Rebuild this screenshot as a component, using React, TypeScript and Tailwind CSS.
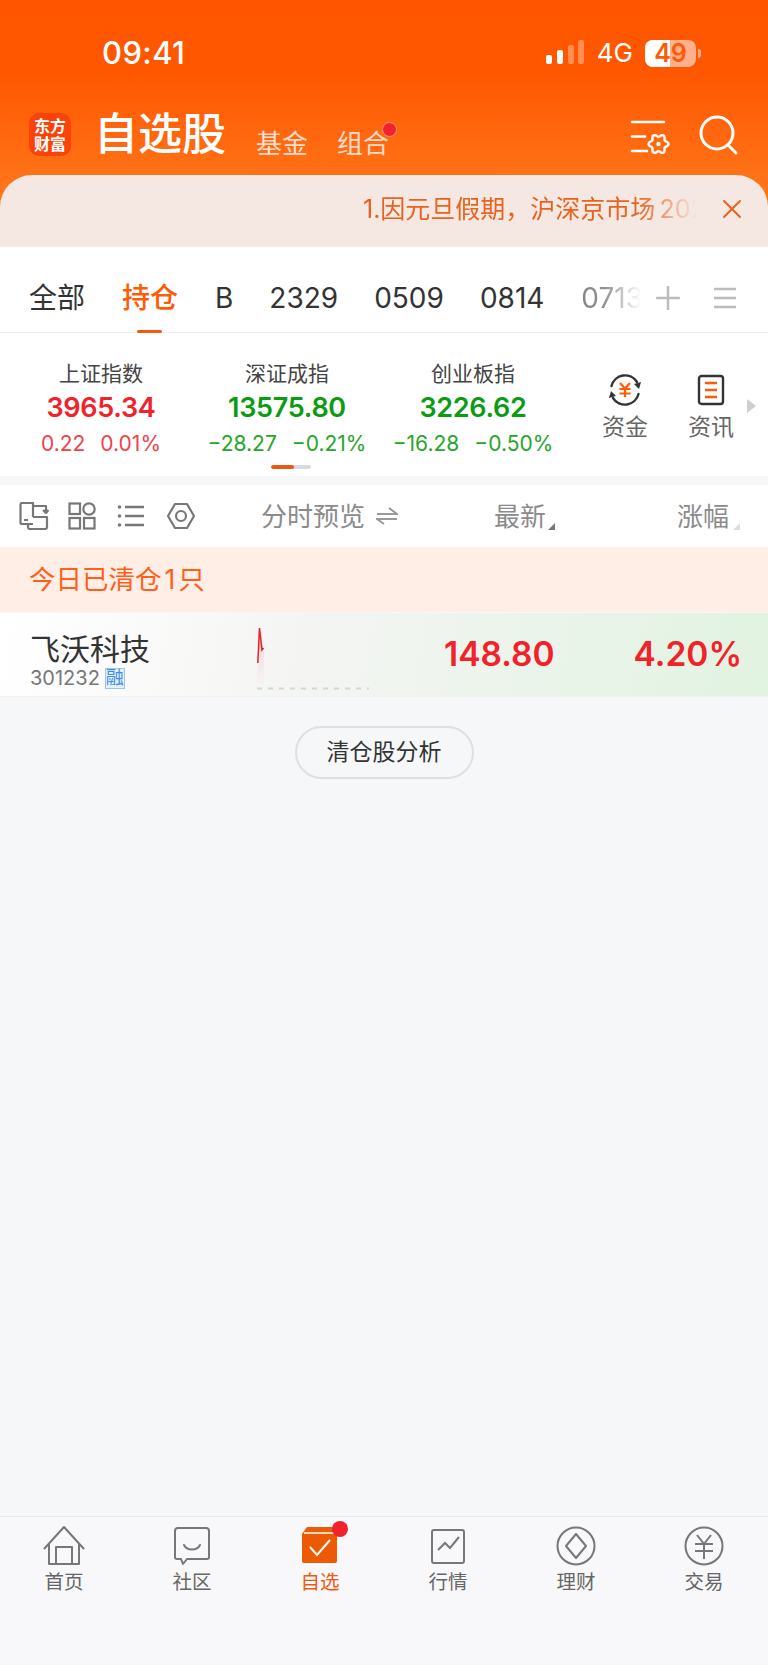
import type { ReactNode } from 'react';

const FONT = 'font-["Inter","Noto_Sans_CJK_SC",sans-serif]';

const INDEXES = [
  { name: '上证指数', value: '3965.34', a: '0.22', b: '0.01%', up: true },
  { name: '深证成指', value: '13575.80', a: '−28.27', b: '−0.21%', up: false },
  { name: '创业板指', value: '3226.62', a: '−16.28', b: '−0.50%', up: false },
];

const TABS = ['B', '2329', '0509', '0814'];

// six-lobed gear outline for the settings icon
const GEAR_PATH =
  Array.from({ length: 72 }, (_, i) => {
    const t = (i / 72) * Math.PI * 2;
    const r = 8.6 + 1.4 * Math.cos(6 * t);
    return `${i === 0 ? 'M' : 'L'}${(28.5 + r * Math.cos(t)).toFixed(2)} ${(27 + r * Math.sin(t)).toFixed(2)}`;
  }).join('') + 'z';

function Ico({ w, h, children, className }: { w: number; h: number; children: ReactNode; className?: string }) {
  return (
    <svg width={w} height={h} viewBox={`0 0 ${w} ${h}`} fill="none" className={className}>
      {children}
    </svg>
  );
}

function StatusBar() {
  return (
    <div className="flex h-[105px] items-start pt-[36px] text-white">
      <div className="ml-[102px] text-[31px] leading-[34px] font-medium tracking-[0.4px]">09:41</div>
      <div className="ml-auto mr-[67px] flex items-center">
        <Ico w={40} h={28}>
          <rect x="0" y="16" width="6" height="9" rx="2" fill="#fff" />
          <rect x="11" y="11" width="6" height="14" rx="2" fill="#fff" />
          <rect x="22" y="6" width="6" height="19" rx="2" fill="#ffa070" fillOpacity=".75" />
          <rect x="32" y="1" width="6" height="24" rx="2" fill="#ffa070" fillOpacity=".75" />
        </Ico>
        <span className="ml-[11px] text-[26px] leading-[34px]">4G</span>
        <div className="relative ml-[12px] flex h-[27px] w-[51px] items-center justify-center overflow-hidden rounded-[8px] bg-[#ffb08c] text-[25px] leading-none font-semibold text-[#ff5a05]">
          <div className="absolute inset-y-0 left-0 w-[25px] bg-white" />
          <span className="relative">49</span>
        </div>
        <div className="ml-[2px] h-[9px] w-[3px] rounded-r-full bg-[#ffb08c]" />
      </div>
    </div>
  );
}

function TitleBar() {
  return (
    <div className="flex h-[70px] items-start text-white">
      <div className="ml-[29px] mt-[8px] flex h-[43px] w-[42px] flex-col items-center justify-center rounded-[10px] bg-[#f9430a] text-[16px] leading-[18px] font-bold">
        <span>东方</span>
        <span>财富</span>
      </div>
      <div className="ml-[23px] text-[44px] leading-[58px] font-medium">自选股</div>
      <div className="ml-[30px] mt-[22px] text-[26px] leading-[34px] text-[#ffdccb]">基金</div>
      <div className="relative ml-[29px] mt-[22px] text-[26px] leading-[34px] text-[#ffdccb]">
        组合
        <span className="absolute right-[-8px] top-[-5px] h-[15px] w-[15px] rounded-full border border-[#ff9a80] bg-[#f0222b]" />
      </div>
      <Ico w={40} h={40} className="ml-auto mt-[12px]">
        <g stroke="#fff" strokeWidth="2.600" strokeLinecap="round">
          <path d="M2 5h32M2 19.500h13M2 34h15" />
        </g>
        <path d={GEAR_PATH} stroke="#fff" strokeWidth="2.400" strokeLinejoin="round" />
        <circle cx="28.500" cy="27" r="2.200" fill="#fff" />
      </Ico>
      <Ico w={40} h={42} className="ml-[29px] mr-[29px] mt-[10px]">
        <circle cx="18" cy="18" r="16" stroke="#fff" strokeWidth="3" />
        <path d="M29 30l8 8" stroke="#fff" strokeWidth="3" strokeLinecap="round" />
      </Ico>
    </div>
  );
}

function Banner() {
  return (
    <div className="flex h-[72px] items-start rounded-t-[32px] bg-[#f5e8e2] pt-[19px]">
      <div className="ml-[363px] w-[334px] overflow-hidden whitespace-nowrap text-[25px] leading-[30px] text-[#e8631f] [word-spacing:-3px] [mask-image:linear-gradient(90deg,#000_82%,transparent_100%)]">
        1.因元旦假期，沪深京市场 2026
      </div>
      <Ico w={20} h={20} className="ml-[25px] mt-[5px]">
        <path d="M2 2l16 16M18 2L2 18" stroke="#e8631f" strokeWidth="2" strokeLinecap="round" />
      </Ico>
    </div>
  );
}

function Tabs() {
  return (
    <div className="relative flex h-[86px] items-start border-b border-[#eeeeee] bg-white pt-[33px]">
      <div className="ml-[29px] text-[28px] leading-[36px] text-[#333]">全部</div>
      <div className="relative ml-[37px] text-[28px] leading-[36px] font-medium text-[#ff5a05]">
        持仓
        <span className="absolute left-[15px] top-[50px] h-[3px] w-[25px] rounded-full bg-[#f2590f]" />
      </div>
      {TABS.map((t, i) => (
        <div key={t} className={`text-[28px] leading-[36px] text-[#333] ${i === 0 ? 'ml-[37px]' : 'ml-[36px]'}`}>
          {t}
        </div>
      ))}
      <div className="ml-[37px] w-[60px] overflow-hidden text-[28px] leading-[36px] text-[#333] [mask-image:linear-gradient(90deg,#0009_0%,#0008_40%,transparent_100%)]">
        0713
      </div>
      <Ico w={24} h={24} className="ml-[15px] mt-[6px]">
        <path d="M12 1v22M1 12h22" stroke="#bcbcbc" strokeWidth="2.500" strokeLinecap="round" />
      </Ico>
      <Ico w={24} h={24} className="ml-[33px] mt-[6px]">
        <path d="M1 3h22M1 12h22M1 21h22" stroke="#bcbcbc" strokeWidth="2.500" />
      </Ico>
    </div>
  );
}

function IndexCard({ item }: { item: (typeof INDEXES)[number] }) {
  const color = item.up ? 'text-[#f2222a]' : 'text-[#0a9c12]';
  const sub = item.up ? 'text-[#f0424a]' : 'text-[#25a52a]';
  return (
    <div className="flex w-[186px] flex-col items-center">
      <div className="text-[21px] leading-[28px] text-[#444]">{item.name}</div>
      <div className={`mt-[3px] text-[27px] leading-[34px] font-semibold tracking-[-0.3px] ${color}`}>{item.value}</div>
      <div className={`mt-[5px] flex gap-[15px] text-[21px] leading-[28px] ${sub}`}>
        <span>{item.a}</span>
        <span>{item.b}</span>
      </div>
    </div>
  );
}

function IndexStrip() {
  return (
    <div className="relative flex h-[143px] items-start bg-white pt-[27px]">
      <div className="ml-[8px] flex">
        {INDEXES.map(x => (
          <IndexCard key={x.name} item={x} />
        ))}
      </div>
      <div className="ml-[16px] flex w-[86px] flex-col items-center">
        <Ico w={34} h={34} className="mt-[13px]">
          <path d="M3.500 13A14 14 0 0 1 29 9M30.500 21A14 14 0 0 1 5 25" stroke="#333" strokeWidth="2.400" strokeLinecap="round" />
          <path d="M33 9l-7 2 5 5zM1 25l7-2-5-5z" fill="#333" />
          <path d="M12 10l5 5.500 5-5.500M11.500 16h11M11.500 20.500h11M17 16v8" stroke="#ff5a05" strokeWidth="2.200" />
        </Ico>
        <div className="mt-[5px] text-[23px] leading-[30px] text-[#666]">资金</div>
      </div>
      <div className="flex w-[86px] flex-col items-center">
        <Ico w={28} h={32} className="mt-[14px]">
          <rect x="2" y="2" width="24" height="28" rx="2.500" stroke="#333" strokeWidth="2.400" />
          <path d="M8 9h12M8 16h12M8 23h12" stroke="#ff5a05" strokeWidth="2.400" />
        </Ico>
        <div className="mt-[6px] text-[23px] leading-[30px] text-[#666]">资讯</div>
      </div>
      <div className="absolute left-[747px] top-[66px] h-0 w-0 border-y-[7px] border-l-[9px] border-y-transparent border-l-[#cfcfcf]" />
      <div className="absolute left-[271px] top-[132px] flex h-[4px] w-[40px] overflow-hidden rounded-full bg-[#d8dade]">
        <div className="w-[23px] rounded-full bg-[#e9590f]" />
      </div>
    </div>
  );
}

function Toolbar() {
  return (
    <div className="mt-[9px] flex h-[62px] items-center bg-white text-[26px] text-[#8b8b8b]">
      <Ico w={30} h={28} className="ml-[19px]">
        <g stroke="#777" strokeWidth="2.200" strokeLinejoin="round">
          <path d="M14 22H3a1.500 1.500 0 0 1-1.500-1.500v-18A1.500 1.500 0 0 1 3 1h11v14" />
          <path d="M9 22v3a2 2 0 0 0 2 2h15a2 2 0 0 0 2-2v-10H14" />
          <path d="M14 4h13v5M24 8l3 3 2.500-3M5 18h4" />
        </g>
      </Ico>
      <Ico w={28} h={28} className="ml-[19px]">
        <g stroke="#777" strokeWidth="2.200">
          <rect x="1.500" y="1.500" width="10.500" height="10.500" />
          <circle cx="21" cy="7" r="5.700" />
          <rect x="1.500" y="16" width="10.500" height="10.500" />
          <rect x="16" y="16" width="10.500" height="10.500" />
        </g>
      </Ico>
      <Ico w={28} h={24} className="ml-[21px]">
        <path d="M8 3h19M8 12h19M8 21h19" stroke="#777" strokeWidth="2.400" />
        <circle cx="2.500" cy="3" r="1.800" fill="#777" />
        <circle cx="2.500" cy="12" r="1.800" fill="#777" />
        <circle cx="2.500" cy="21" r="1.800" fill="#777" />
      </Ico>
      <Ico w={28} h={28} className="ml-[22px]">
        <path d="M8 2h12l7 12-7 12H8L1 14z" stroke="#777" strokeWidth="2.200" strokeLinejoin="round" />
        <circle cx="14" cy="14" r="5" stroke="#777" strokeWidth="2.200" />
      </Ico>
      <div className="ml-[66px] w-[106px] whitespace-nowrap">分时预览</div>
      <Ico w={22} h={18} className="ml-[9px]">
        <path d="M1 7h20L13 1M21 12H1l7 5" stroke="#999" strokeWidth="2" />
      </Ico>
      <div className="relative ml-[96px] whitespace-nowrap">
        最新
        <span className="absolute bottom-[6px] right-[-9px] h-0 w-0 border-b-[7px] border-l-[7px] border-b-[#777] border-l-transparent" />
      </div>
      <div className="relative ml-[131px] whitespace-nowrap">
        涨幅
        <span className="absolute bottom-[6px] right-[-11px] h-0 w-0 border-b-[7px] border-l-[7px] border-b-[#ddd] border-l-transparent" />
      </div>
    </div>
  );
}

function StockRow() {
  return (
    <div className="relative mt-[1px] flex h-[84px] items-start border-b border-[#f0f0f0] bg-[linear-gradient(100deg,#ffffff_0%,#f4f5f3_40%,#e1f3e1_100%)]">
      <div className="ml-[30px] mt-[18px] w-[227px] shrink-0">
        <div className="text-[30px] leading-[36px] text-[#333]">飞沃科技</div>
        <div className="-mt-[2px] flex items-center text-[20px] leading-[26px] text-[#777]">
          301232
          <span className="ml-[5px] flex h-[21px] w-[20px] items-center justify-center border border-[#9cc4f0] bg-[#e6f0fb] text-[18px] leading-none text-[#3f8ee0]">
            融
          </span>
        </div>
      </div>
      <Ico w={113} h={70} className="mt-[13px]">
        <defs>
          <linearGradient id="spike" x1="0" y1="0" x2="0" y2="1">
            <stop offset="0" stopColor="#f0242c" stopOpacity=".18" />
            <stop offset="1" stopColor="#f0242c" stopOpacity="0" />
          </linearGradient>
        </defs>
        <path d="M0 50L3 2L6 24L7 26V60H0z" fill="url(#spike)" />
        <path d="M0.800 37L2.500 2L5 24L6.500 22" stroke="#ee1c25" strokeWidth="1.500" />
        <path d="M0 62.500H112" stroke="#d4d6d8" strokeWidth="2" strokeDasharray="5 6" />
      </Ico>
      <div className="ml-[74px] mt-[19px] text-[33.500px] leading-[44px] font-semibold text-[#f2222a]">148.80</div>
      <div className="ml-[79px] mt-[19px] text-[33.500px] leading-[44px] font-semibold text-[#f2222a]">4.20%</div>
    </div>
  );
}

function TabIcon({ name }: { name: string }) {
  const line = { stroke: '#777', strokeWidth: 2, strokeLinejoin: 'round' as const };
  switch (name) {
    case '首页':
      return (
        <Ico w={42} h={40}>
          <path d="M1 23L21 1l20 22" {...line} />
          <path d="M6 18v20h30V18" {...line} />
          <path d="M13 38V21h16v17" {...line} />
        </Ico>
      );
    case '社区':
      return (
        <Ico w={38} h={40}>
          <path d="M5 2h28a3 3 0 0 1 3 3v26a2 2 0 0 1-2 2H14l-4 5-2-5H4a2 2 0 0 1-2-2V5a3 3 0 0 1 3-3z" {...line} />
          <path d="M11 19c3 6 13 6 16 0" {...line} strokeLinecap="round" />
        </Ico>
      );
    case '自选':
      return (
        <div className="relative">
          <Ico w={38} h={40}>
            <path d="M6 1h30v34a2 2 0 0 1-2 2H3a2 2 0 0 1-2-2V8z" fill="#ec5a05" />
            <path d="M3 7h31" stroke="#ffd6bd" strokeWidth="2" />
            <path d="M9 21l7 8 13-15" stroke="#fff" strokeWidth="2" />
          </Ico>
          <span className="absolute right-[-9px] top-[-5px] h-[16px] w-[16px] rounded-full bg-[#f0222b]" />
        </div>
      );
    case '行情':
      return (
        <Ico w={36} h={40}>
          <rect x="2" y="4" width="32" height="33" rx="2" {...line} />
          <path d="M8 24l7-7 5 5 9-11" stroke="#777" strokeWidth="2" />
        </Ico>
      );
    case '理财':
      return (
        <Ico w={40} h={40}>
          <circle cx="20" cy="20" r="18.500" {...line} />
          <path d="M20 8l10 12-10 12-10-12z" {...line} />
        </Ico>
      );
    default:
      return (
        <Ico w={40} h={40}>
          <circle cx="20" cy="20" r="18.500" {...line} />
          <path d="M13 9l7 9 7-9M11 18h18M11 25h18M20 18v15" {...line} />
        </Ico>
      );
  }
}

function BottomNav() {
  const items = ['首页', '社区', '自选', '行情', '理财', '交易'];
  return (
    <div className="flex h-[149px] items-start border-t border-[#e9e9ec] bg-[#f8f8fa] pt-[8px]">
      {items.map(n => (
        <div key={n} className="flex w-[128px] flex-col items-center">
          <div className="flex h-[42px] items-center">
            <TabIcon name={n} />
          </div>
          <div className={`mt-[1px] text-[19.500px] leading-[28px] ${n === '自选' ? 'text-[#f2590f]' : 'text-[#666]'}`}>{n}</div>
        </div>
      ))}
    </div>
  );
}

export default function App() {
  return (
    <div className={`flex h-[1665px] w-[768px] flex-col overflow-hidden bg-[#f6f7f9] ${FONT}`}>
      <div className="bg-[linear-gradient(180deg,#ff5500_0px,#ff5700_70px,#ff751a_190px)]">
        <StatusBar />
        <TitleBar />
        <Banner />
      </div>
      <Tabs />
      <IndexStrip />
      <Toolbar />
      <div className="flex h-[65px] items-center bg-[#ffeee6] pl-[29px] text-[26.500px] text-[#ff5f1a]">
        今日已清仓<span className="mx-[3px]">1</span>只
      </div>
      <StockRow />
      <div className="flex flex-1 justify-center pt-[29px]">
        <div className="flex h-[53px] w-[179px] items-center justify-center rounded-full border-2 border-[#dedfe1] text-[23px] text-[#333]">
          清仓股分析
        </div>
      </div>
      <BottomNav />
    </div>
  );
}
